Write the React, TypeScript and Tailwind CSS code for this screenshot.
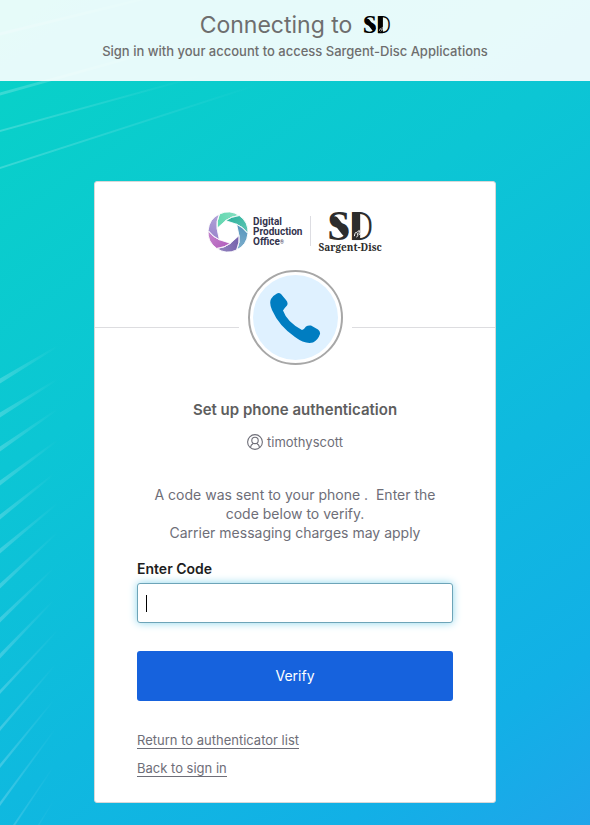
import type { ReactNode } from 'react';

const bladeColors = ['#5fd6ae', '#2fb39d', '#5796bd', '#7460ac', '#b35fbd', '#9a86cc'];

const ApertureIcon = () => (
  <svg viewBox="0 0 40 40" className="size-10 shrink-0" aria-hidden="true">
    <defs>
      <linearGradient id="blade">
        <stop offset="0" stopColor="#fff" stopOpacity="0" />
        <stop offset="1" stopColor="#fff" stopOpacity=".25" />
      </linearGradient>
    </defs>
    {bladeColors.map((color, i) => (
      <g key={color} transform={`rotate(${i * 60 - 12} 20 20)`} stroke="#fff" strokeWidth=".6">
        <path
          d="M10 14.250L20 8.500Q26 5.500 34.500 6.200A20 20 0 0 0 15.300 .600Q10.500 7.500 10 14.250Z"
          fill={color}
        />
        <path
          d="M10 14.250L20 8.500Q26 5.500 34.500 6.200A20 20 0 0 0 15.300 .600Q10.500 7.500 10 14.250Z"
          fill="url(#blade)"
        />
      </g>
    ))}
  </svg>
);

const Monogram = ({ className, color }: { className: string; color: string }) => (
  <svg viewBox="0 0 44 30" className={className} overflow="visible" role="img" aria-label="SD">
    <g fill={color}>
      <text x="-2" y="29" fontFamily="Liberation Serif, serif" fontWeight="700" fontSize="43">
        S
      </text>
      <text x="20" y="29" fontFamily="Roboto, sans-serif" fontWeight="300" fontSize="40">
        D
      </text>
      <rect x="24" y="1" width="8" height="28" />
    </g>
    <path d="M6 8L16 21" stroke={color} strokeWidth="7" strokeLinecap="round" />
    <path d="M26 25q1-6 3-3t-1 4M29 21q3-4 2 0t2 1" fill="none" stroke="#fff" strokeWidth="1" />
  </svg>
);

const PhoneIcon = () => (
  <svg viewBox="0 0 52 52" className="size-[52px]" aria-hidden="true">
    <path
      d="M8 1.5Q10 .5 12 2L17 8Q19.500 11 18 13.500Q15 16.500 14 18.500Q18 30 33 38Q35.500 37 37 34.500Q39 33 42 33.500L49 37.500Q51.500 39.500 51 42Q49 48 44 50.500Q36 52.500 26 45Q10 34 3 18Q0 11 2 7Q4 3.500 8 1.500Z"
      fill="#007dc1"
    />
  </svg>
);

const UserIcon = () => (
  <svg
    viewBox="0 0 16 16"
    className="size-4"
    fill="none"
    stroke="#6e6e78"
    strokeWidth="1.1"
    aria-hidden="true"
  >
    <circle cx="8" cy="8" r="7.4" />
    <circle cx="8" cy="6.400" r="3.200" />
    <path d="M3.400 13.600Q3.800 10.800 6.200 9.500M12.600 13.600Q12.200 10.800 9.800 9.500" />
  </svg>
);

// Faint light streaks that fan in from the left edge: start y, end y, end x, thickness
const streaks = [
  [34, -10, 180, 3],
  [94, 30, 230, 3],
  [131, 76, 200, 2],
  [168, 84, 260, 2],
  [381, 346, 58, 5],
  [415, 379, 58, 5],
  [449, 409, 58, 5],
  [483, 440, 58, 5],
  [517, 474, 54, 5],
  [551, 503, 58, 5],
  [586, 532, 58, 5],
  [620, 568, 54, 5],
  [656, 600, 54, 5],
  [692, 630, 58, 4],
  [729, 664, 56, 4],
  [766, 700, 54, 4],
  [804, 728, 56, 4],
  [846, 766, 54, 4],
  [888, 800, 54, 4],
];

const Streaks = () => (
  <svg className="absolute inset-0 size-full" aria-hidden="true">
    <defs>
      <linearGradient id="streak">
        <stop offset="0" stopColor="#fff" stopOpacity=".2" />
        <stop offset="1" stopColor="#fff" stopOpacity="0" />
      </linearGradient>
    </defs>
    {streaks.map(([y, endY, endX, size]) => (
      <path
        key={y}
        d={`M0 ${y - size / 2}L${endX} ${endY - 1}V${endY + 1}L0 ${y + size / 2}Z`}
        fill="url(#streak)"
      />
    ))}
  </svg>
);

const FooterLink = ({ children }: { children: ReactNode }) => (
  <a href="#" className="border-b border-[#6e6e78] text-[13px] leading-4 text-[#6e6e78]">
    {children}
  </a>
);

export default function App() {
  return (
    <div className="relative min-h-screen bg-linear-[145deg,#08d3c6_0%,#0cc6d4_38%,#0fb9df_65%,#12b0e6_86%,#1fa5ea_100%] font-[Inter,sans-serif]">
      <Streaks />
      <div className="relative flex min-h-screen flex-col">
        <header className="flex flex-col items-center bg-white/90 px-4 pt-[9px] pb-5 text-[#6e6e6e]">
          <h1 className="flex items-center gap-3 text-[23px] leading-8">
            Connecting to
            <Monogram className="h-[18px] w-[26px]" color="#000" />
          </h1>
          <p className="text-center text-[13px] leading-5 font-medium">
            Sign in with your account to access Sargent-Disc Applications
          </p>
        </header>

        <main className="flex flex-1 flex-col items-center px-4 pt-[100px] pb-[22px]">
          <section className="w-full max-w-[402px] rounded-[3px] border border-[#d8d8d8] bg-white">
            <div className="flex h-[88px] items-start justify-center pt-[30px]">
              <ApertureIcon />
              <p className="ml-[5px] pt-[5px] font-[Roboto,sans-serif] text-[10px] leading-[10px] font-bold text-[#33334d]">
                Digital
                <br />
                Production
                <br />
                Office<span className="align-top text-[5px]">®</span>
              </p>
              <div className="mt-1 ml-2 h-[30px] w-px bg-[#dddde2]" />
              <div className="ml-[7px] flex flex-col items-center">
                <Monogram className="h-[29px] w-[43px]" color="#2d2d2d" />
                <p className="font-['Noto_Serif','DejaVu_Serif',serif] text-[10px] leading-3 font-bold text-[#2d2d2d]">
                  Sargent-Disc
                </p>
              </div>
            </div>

            <div className="flex items-center gap-[9px]">
              <div className="mt-[19px] h-px flex-1 bg-[#dddde0]" />
              <div className="flex size-[95px] items-center justify-center rounded-full border-2 border-[#a7a7a7] bg-white">
                <div className="flex size-[85px] items-center justify-center rounded-full bg-[#dff1ff]">
                  <PhoneIcon />
                </div>
              </div>
              <div className="mt-[19px] h-px flex-1 bg-[#dddde0]" />
            </div>

            <div className="px-[42px] pt-[33px] pb-[25px] text-[#6e6e78]">
              <h2 className="text-center text-[15px] leading-6 font-semibold text-[#5e5e5e]">
                Set up phone authentication
              </h2>
              <div className="mt-2 flex items-center justify-center gap-1 text-[13px] leading-6">
                <UserIcon />
                <span>timothyscott</span>
              </div>
              <p className="mt-[31px] px-2 text-center text-sm leading-[19px]">
                A code was sent to your phone .&nbsp; Enter the code below to verify.
                <br />
                Carrier messaging charges may apply
              </p>
              <form onSubmit={(e) => e.preventDefault()}>
                <label htmlFor="code" className="mt-[17px] block text-sm leading-5 font-semibold text-[#1d1d21]">
                  Enter Code
                </label>
                <div className="relative mt-1">
                  <input
                    id="code"
                    type="text"
                    className="block h-10 w-full rounded-[3px] border border-[#6da4b8] bg-white px-2 text-sm text-[#1d1d21] shadow-[0_0_8px_#8cd6ec] outline-none"
                  />
                  <span className="absolute top-3 left-[9px] h-[17px] w-px bg-black" />
                </div>
                <button
                  type="submit"
                  className="mt-7 h-[50px] w-full rounded-[3px] bg-[#1662dd] text-sm text-white"
                >
                  Verify
                </button>
              </form>
              <nav className="mt-[31px] flex flex-col items-start gap-[11px]">
                <FooterLink>Return to authenticator list</FooterLink>
                <FooterLink>Back to sign in</FooterLink>
              </nav>
            </div>
          </section>
        </main>
      </div>
    </div>
  );
}
